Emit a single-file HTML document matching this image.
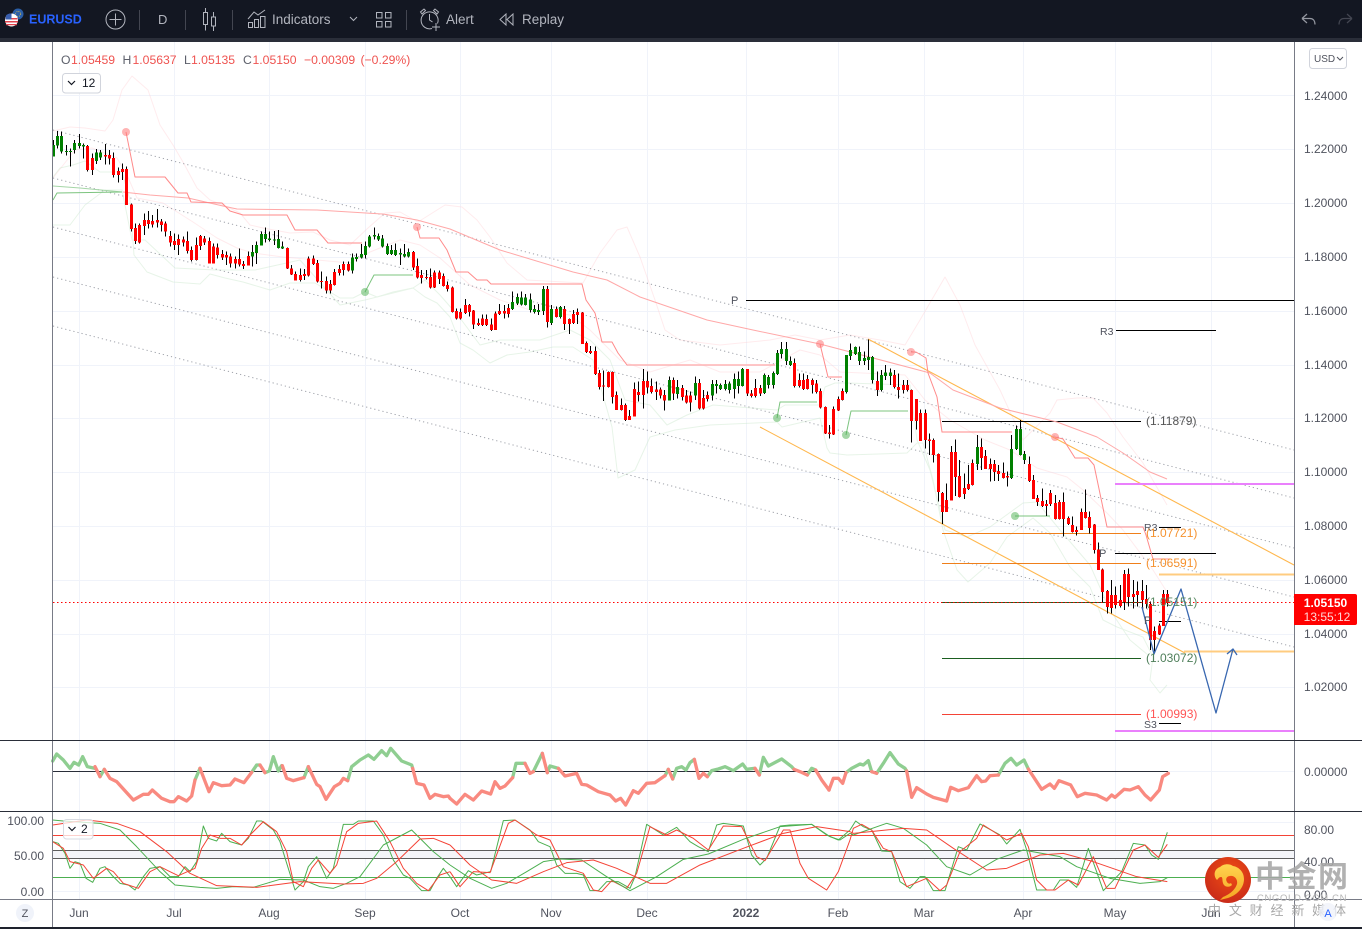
<!DOCTYPE html>
<html><head><meta charset="utf-8"><title>EURUSD</title>
<style>
html,body{margin:0;padding:0;background:#fff;width:1362px;height:929px;overflow:hidden}
svg{display:block;font-family:"Liberation Sans","Noto Sans CJK SC",sans-serif}
text{white-space:pre}
</style></head><body>
<svg width="1362" height="929" viewBox="0 0 1362 929" xmlns="http://www.w3.org/2000/svg">
<rect width="1362" height="929" fill="#fff"/>

<!-- grid -->
<g stroke="#f0f3fa" stroke-width="1" fill="none" shape-rendering="crispEdges">
<path d="M53 95.5H1294M53 149.5H1294M53 203.5H1294M53 257.5H1294M53 311.5H1294M53 365.5H1294M53 418.5H1294M53 472.5H1294M53 526.5H1294M53 580.5H1294M53 634.5H1294M53 687.5H1294"/>
<path d="M79.5 42V899M174.5 42V899M269.5 42V899M365.5 42V899M460.5 42V899M551.5 42V899M647.5 42V899M746.5 42V899M838.5 42V899M924.5 42V899M1023.5 42V899M1115.5 42V899M1211.5 42V899"/>
<path d="M53 771.5H1294M53 822.5H1294M53 891.5H1294"/>
</g>

<!-- faint bands -->
<g fill="none" stroke-width="1" stroke-linejoin="round">
<g stroke="#ffcdd2" opacity=".38">
<path d="M53 131L70 127 85 128 105 131 113 120 122 90 132 76 148 90 160 125 173 145 183 162 197 188 210 200 223 205 240 213 250 225 263 228 290 233 313 232 330 240 350 245 368 228 385 213 400 212 418 222 445 205 462 207 477 220 490 237 507 263 527 280 583 283 600 253 617 230 627 227 640 257 655 300 665 330 680 340 720 345 770 340 795 335 820 340 850 335 880 340 905 345 920 320 945 277 960 305 975 345 1000 390 1023 440 1050 413 1057 400 1077 398 1093 398 1107 413 1123 437 1143 463 1167 505"/>
<path d="M53 178L75 150 92 148 102 152 117 158 127 175 137 198 163 203 193 222 217 238 237 248 253 253 283 257 317 260 350 263 370 252 400 240 420 245 440 258 470 285 500 300 530 310 570 315 590 330 620 360 650 372 663 368 690 360 720 372 760 372 800 350 820 355 840 372 905 375 925 400 950 420 985 440 1010 450 1037 468 1067 477 1083 490 1107 513 1123 530 1153 570 1167 592"/>
</g>
<g stroke="#c8e6c9" opacity=".42">
<path d="M53 177L60 168 73 165 85 161 100 172 122 172 130 200 134 255 147 272 173 282 200 284 210 274 225 278 243 282 270 290 290 283 315 283 340 298 353 298 365 292 377 297 393 292 413 288 425 297 437 303 450 317 460 343 473 350 490 363 507 355 530 352 553 347 573 347 593 360 612 427 618 478 635 470 650 437 675 430 710 425 777 422 782 427 820 418 827 448 830 453 847 455 907 453 917 443 923 443 933 480 943 530 957 570 968 582 990 563 1007 537 1033 518 1050 533 1070 567 1090 587 1103 620 1117 627 1143 637 1153 657 1150 680 1160 693 1167 685"/>
<path d="M53 225L70 225 85 205 105 190 122 190 132 240 145 240 175 268 215 270 255 270 300 260 340 305 365 300 393 293 413 288 425 280 440 295 460 318 480 345 500 340 540 340 570 330 590 340 610 360 625 400 650 405 667 425 687 415 713 405 777 410 785 405 820 405 825 387 835 383 847 383 910 385 917 440 930 470 945 530 967 537 990 527 1023 503 1037 502 1060 530 1090 565 1110 610 1130 640 1148 655"/>
</g>
</g>

<!-- dotted channels -->
<g stroke="#9598a1" stroke-width="1" stroke-dasharray="1.2 3" fill="none" opacity=".9">
<path d="M53 130L1294 450M53 178L1294 498M53 227L1294 548M53 277L1294 597M53 326L1294 647"/>
</g>

<!-- orange channel & levels -->
<g fill="none">
<path d="M868 339L1294 565M760 427L1185 653" stroke="#ffb74d" stroke-width="1.1"/>
<path d="M1159 574.5H1294M1184 651.5H1294" stroke="#ffcc80" stroke-width="2"/>
<path d="M1115 484H1294M1115 731H1294" stroke="#ea80fc" stroke-width="2"/>
<g shape-rendering="crispEdges" stroke-width="1">
<path d="M942 533.5H1141M942 563.5H1141" stroke="#ef7f1a"/>
<path d="M942 602.5H1141M942 658.5H1141" stroke="#1b5e20"/>
<path d="M942 714.5H1141" stroke="#f44336"/>
<path d="M746 300.5H1294M1116 330.5H1216M942 421.5H1141M1159 527.5H1181M1115 553.5H1216M1159 621.5H1181M1159 723.5H1181" stroke="#000"/>
</g>
</g>

<!-- trend lines -->
<g fill="none" stroke-linejoin="round">
<path d="M53 186L80 188 122 192" stroke="#a5d6a7" stroke-width="1"/>
<path d="M123 192L150 195 188 198 223 206 237 209 317 210 383 214 417 220 450 229 500 250 573 272 607 280 640 297 707 320 753 330 820 344 930 373 953 390 1000 408 1057 422 1097 437 1123 453 1150 472 1167 479" stroke="#ffa8a8" stroke-width="1"/>
<g stroke="#ff8a8a" stroke-width="1">
<path d="M126 132L135 177 165 177 178 193 187 193 191 202 222 203 230 211 243 215 287 215 295 230 317 230 328 243 362 243"/>
<path d="M417 227L420 238 439 238 447 250 456 272 468 272 477 280 487 280 491 284 582 284 586 300 595 313 602 342 612 342 618 353 627 365 640 365"/>
<path d="M820 344L828 377 842 377M911 352L916 352 926 358 928 373 937 397 942 432 1012 432M1055 437L1063 439 1075 458 1088 458 1094 465 1107 527 1143 527 1146 535 1153 559 1170 559"/>
</g>
<path d="M628 365H775" stroke="#ffb4b4" stroke-width="1.6"/>
<g stroke="#7cc47f" stroke-width="1">
<path d="M53 200L57 193 122 192"/>
<path d="M365 292L374 275 413 275"/>
<path d="M777 418L780 402 817 402"/>
<path d="M846 435L851 411 908 411"/>
<path d="M1015 516H1050"/>
</g>
</g>
<g>
<g fill="#f77" opacity=".55"><circle cx="126" cy="132" r="4"/><circle cx="417" cy="227" r="4"/><circle cx="820" cy="344" r="4"/><circle cx="911" cy="352" r="4"/><circle cx="1055" cy="437" r="4"/></g>
<g fill="#4caf50" opacity=".5"><circle cx="365" cy="292" r="4"/><circle cx="777" cy="418" r="4"/><circle cx="846" cy="435" r="4"/><circle cx="1015" cy="516" r="4"/></g>
</g>

<!-- candles -->
<g fill="none" shape-rendering="crispEdges">
<g transform="translate(50 125) scale(.33333)">
<path stroke="#000" stroke-width="3" d="M10 45V95M22 18V70M34 20V86M49 60V92M61 70V125M73 45V85M88 27V70M100 55V100M112 60V140M127 85V150M139 72V117M151 75V105M166 57V118M178 75V118M190 83V158M205 128V172M217 115V165M229 125V240M244 235V320M256 295V357M268 295V355M283 265V330M295 258V310M307 270V308M322 252V308M334 282V320M346 290V335M361 318V365M373 325V375M385 328V390M400 335V365M412 320V385M424 365V410M439 337V407M451 330V375M463 333V360M478 338V416M490 355V416M502 355V400M517 375V405M529 380V420M541 385V428M556 395V430M568 370V425M580 408V432M595 380V422M607 360V425M619 350V417M634 320V362M646 307V352M658 320V350M673 318V360M685 315V370M697 350V372M712 368V432M724 420V450M736 440V467M751 430V470M763 432V465M775 395V454M790 392V420M802 405V472M814 440V490M829 455V505M841 465V505M853 432V482M868 420V452M880 410V452M895 410V440"/>
<path stroke="#f00" stroke-width="9" d="M112 63V135M127 99V135M166 90V95M178 90V101M190 99V150M205 138V150M217 132V141M229 132V240M244 238V312M256 309V348M268 300V352M283 285V303M295 285V297M307 288V298M322 285V292M334 290V300M346 296V320M361 333V352M373 348V360M385 342V360M400 343V352M412 348V378M424 375V405M439 360V405M451 333V363M463 340V352M478 348V416M490 365V416M502 367V390M517 387V397M529 390V398M541 395V416M556 402V416M568 402V418M580 417V423M595 393V421M712 369V431M724 430V448M736 447V466M751 450V465M763 447V453M775 400V452M790 400V417M802 414V470M814 468V471M829 468V497M841 477V497M853 441V480M868 432V444M880 417V435M895 417V437"/>
<path stroke="#008000" stroke-width="9" d="M10 60V95M22 33V62M34 33V80M49 78V81M61 78V81M73 54V75M88 54V63M100 60V65M139 82V108M151 82V97M607 381V395M619 360V384M634 327V362M646 327V342M658 340V345M673 343V346M685 342V369M697 365V371"/>
</g>
<g transform="translate(340 220) scale(.33333)">
<path stroke="#000" stroke-width="3" d="M10 130V165M37 100V160M49 100V125M64 72V115M76 65V115M88 45V82M103 22V58M115 40V63M127 45V82M142 70V105M154 75V105M166 70V108M181 85V135M193 72V112M205 85V112M220 93V150M232 115V175M244 150V190M259 150V178M271 145V205M283 152V204M298 152V192M310 160V200M322 185V215M337 200V278M349 265V298M361 265V298M376 237V282M388 252V290M400 270V327M415 295V318M427 283V318M439 283V318M454 295V333M466 275V330M478 252V285M493 255V295M505 252V293M517 215V270M532 220V255M544 215V256M556 222V257M571 220V278M583 255V280M595 252V285M610 198V285M622 198V323M634 255V315M649 260V292M661 258V295M673 258V330M688 295V342M700 270V312M712 265V312M727 276V372M739 365V399M751 378V402M766 380V465M778 450V508M790 452V543M805 455V502M817 455V550M829 515V570M844 535V572M856 550V603M868 570V600M883 487V590M895 500V545"/>
<path stroke="#f00" stroke-width="9" d="M10 132V150M220 96V142M232 138V173M244 165V174M259 171V174M271 171V203M283 158V203M298 158V177M310 168V198M322 195V207M337 203V276M349 273V295M361 276V295M376 255V279M388 255V276M400 272V313M415 309V315M427 295V315M439 297V315M454 313V330M466 280V330M478 273V282M493 273V280M505 264V282M622 207V306M649 267V291M673 267V312M688 297V312M700 282V309M712 276V285M727 277V372M739 369V396M751 393V399M766 393V462M778 459V501M790 497V500M805 456V501M817 456V531M829 525V570M844 555V570M856 555V600M868 588V600M883 507V590M895 516V525"/>
<path stroke="#008000" stroke-width="9" d="M37 113V152M49 111V117M64 102V113M76 78V105M88 50V80M103 45V50M115 48V58M127 55V80M142 78V102M154 90V102M166 90V105M181 99V103M193 102V110M205 96V110M517 246V267M532 231V250M544 233V254M556 233V255M571 239V270M583 267V276M595 270V276M610 207V273M634 267V309M661 261V291"/>
</g>
<g transform="translate(600 330) scale(.33333)">
<path stroke="#000" stroke-width="3" d="M115 155V200M130 117V236M142 125V190M154 145V190M169 155V210M181 172V205M193 180V242M208 140V212M220 142V210M232 150V205M247 165V212M259 180V220M271 185V245M286 140V210M298 147V238M310 180V238M322 185V215M337 150V212M349 150V190M361 160V180M376 150V182M388 155V190M403 130V205M415 125V190M427 114V170M442 117V198M454 180V203M466 147V203M481 165V198M493 130V192M505 135V175M520 125V175M532 60V135M544 36V85M559 36V105M571 80V108M583 85V172M598 130V172M610 130V180M622 135V178M637 145V190M649 150V190M661 175V235M676 230V312M688 285V325M700 230V315M715 200V243M727 175V211M739 75V190M751 40V90M766 50V75M778 50V105M793 65V105M805 28V120M817 78V160M832 125V198M844 120V185M856 105V150M871 115V165M883 120V175M895 130V205"/>
<path stroke="#f00" stroke-width="9" d="M115 186V195M130 153V195M142 153V172M154 168V186M169 178V186M181 178V197M193 195V212M220 150V190M247 174V201M259 197V218M271 197V218M298 159V236M310 204V236M322 195V207M442 117V190M454 190V198M466 174V198M481 174V190M583 99V168M598 150V168M610 150V177M622 147V177M637 150V165M649 160V186M661 183V233M676 231V310M688 307V312M700 237V314M715 207V241M727 183V210M832 153V180M883 135V171M895 171V180"/>
<path stroke="#008000" stroke-width="9" d="M208 150V212M232 171V192M286 159V197M337 162V197M349 162V168M361 165V177M376 162V177M388 160V180M403 147V177M415 147V168M427 117V168M493 135V189M505 141V165M520 129V165M532 69V132M544 57V72M559 57V93M571 93V105M739 75V186M751 60V78M766 51V72M778 66V93M793 84V93M805 81V90M817 81V150M844 135V180M856 127V138M871 127V138"/>
</g>
<g transform="translate(890 380) scale(.33333)">
<path stroke="#000" stroke-width="3" d="M40 0V40M52 0V35M65 28V187M79 57V148M91 88V183M106 88V205M118 160V225M130 175V247M145 220V365M157 336V432M169 310V396M184 198V362M196 178V348M209 240V352M223 280V357M235 255V330M247 238V316M262 165V270M274 175V270M286 210V267M301 236V305M313 240V303M325 255V303M340 248V295M352 275V320M364 165V297M379 137V210M391 120V226M403 213V252M418 230V306M430 285V357M442 345V378M457 325V381M469 360V408M481 330V378M496 345V418M508 360V418M520 337V470M535 410V435M547 410V458M559 440V467M574 385V450M586 328V415M598 395V460M613 432V520M625 488V570M637 566V667M652 630V700M664 600V700M676 620V685M691 615V682M703 570V690M715 565V680M730 600V685M742 605V680M757 600V685M769 615V685M781 665V810M793 740V815M808 730V765M820 630V738M832 630V680"/>
<path stroke="#f00" stroke-width="9" d="M40 15V30M52 15V30M65 30V123M79 57V123M91 99V183M106 99V180M118 178V183M130 180V225M145 222V336M157 339V396M169 360V396M184 216V362M196 216V291M209 288V351M223 324V342M235 312V327M247 249V315M274 201V234M286 228V267M301 252V267M313 252V276M325 273V282M340 279V294M352 288V292M418 252V303M430 300V357M442 354V366M457 363V378M469 372V378M481 339V372M496 369V417M508 366V417M520 366V417M535 414V432M547 435V456M559 450V456M574 396V450M586 396V414M598 411V444M613 433V510M625 508V570M637 568V636M652 633V681M664 645V684M676 645V675M691 660V678M703 582V666M715 582V651M730 642V651M742 633V645M757 633V660M769 657V672M781 672V780M793 753V780M808 736V763M820 642V738M832 642V669"/>
<path stroke="#008000" stroke-width="9" d="M262 201V252M364 207V294M379 147V207M391 147V225M403 222V240"/>
</g>
</g>

<!-- price line -->
<path d="M53 602.5H1294" stroke="#f00" stroke-width="1" stroke-dasharray="1.5 2.5" shape-rendering="crispEdges"/>

<!-- blue projection -->
<g fill="none" stroke="#3867b0" stroke-width="1.3" stroke-linejoin="round">
<path d="M1142 607L1154 654 1181 589 1216 713 1233 649"/>
<path d="M1227 654L1233 649 1237 655"/>
</g>

<!-- level labels -->
<g font-size="12">
<text x="731" y="304" fill="#50535e" font-size="11">P</text>
<text x="1100" y="335" fill="#50535e" font-size="10.5">R3</text>
<text x="1144" y="531" fill="#50535e" font-size="10.5">R3</text>
<text x="1099" y="557" fill="#50535e" font-size="11">P</text>
<text x="1144" y="624" fill="#50535e" font-size="11">P</text>
<text x="1144" y="728" fill="#50535e" font-size="10.5">S3</text>
<text x="1146" y="425" fill="#555">(1.11879)</text>
<text x="1146" y="537" fill="#f5922f">(1.07721)</text>
<text x="1146" y="567" fill="#f5922f">(1.06591)</text>
<text x="1146" y="606" fill="#5a8a63">(1.05151)</text>
<text x="1146" y="662" fill="#4f7f5a">(1.03072)</text>
<text x="1146" y="718" fill="#f55">(1.00993)</text>
</g>

<!-- oscillator pane 2 -->
<path d="M53 771.5H1168" stroke="#2a2e39" stroke-width="1.2" shape-rendering="crispEdges"/>
<g fill="none" stroke-linejoin="round" stroke-linecap="round">
<g transform="translate(0 735) scale(.33333)" stroke-width="10">
<path stroke="#8fce91" d="M158 78L170 57 190 75 210 100 222 82 236 90 248 65 262 95 285 100M300 125L313 103M585 135L600 100M755 112L770 90 780 90M795 113L808 108 820 65 835 108 845 92M912 128L925 95M1043 137L1055 95 1080 75 1105 60 1122 73 1145 47 1160 62 1172 40 1205 78 1235 90 1238 100"/>
<path stroke="#f98a80" d="M285 95L300 125M313 103L330 130 350 140 400 195 430 178 445 178 457 165 485 190 510 200 522 200 535 185 560 198 575 183 585 135M600 100L627 170 640 143 665 152 690 150 705 132 732 143 755 112M780 90L795 113M847 92L860 130 880 137 912 128M925 95L950 148 960 155 978 193 1003 155 1020 145 1030 130 1043 137M1238 100L1250 145 1272 150 1290 190 1305 178 1330 185 1345 183 1350 190"/>
</g>
<g transform="translate(450 740) scale(.33333)" stroke-width="10">
<path stroke="#8fce91" d="M188 113L198 70 225 70M250 95L277 40M292 98L300 78 325 85M645 107L655 88M668 117L680 85 695 80 708 90 720 68 733 58M772 110L785 92 805 87 825 80 850 92 878 72 890 88 915 85M928 105L940 52 955 78 995 57 1025 80 1032 88M1072 105L1085 85 1097 90"/>
<path stroke="#f98a80" d="M0 175L20 192 45 163 70 180 95 153 122 162 135 125 150 145 165 138 188 113M225 70L240 100 250 95M277 40L292 98M325 85L345 108 380 100 395 133 410 135 445 155 480 165 497 183 512 175 527 195 550 152 565 160 590 130 615 128 645 107M655 88L668 117M733 58L747 115 760 100 772 110M915 85L928 105M1032 88L1050 95 1072 105M1097 90L1115 120 1137 150"/>
</g>
<g transform="translate(820 740) scale(.33333)" stroke-width="10">
<path stroke="#8fce91" d="M78 98L95 85 120 72 130 75 145 62 155 95M170 100L190 70 210 38 235 72 255 85 260 93M535 105L555 70 573 55 590 75 612 60 625 87"/>
<path stroke="#f98a80" d="M27 150L40 115 55 115 68 130 78 98M155 95L170 100M260 93L275 172 290 143 320 162 340 172 380 183 392 142 415 152 445 143 470 107 485 125 497 123 510 107 535 105M625 87L665 148 690 132 703 145 717 122 752 135 772 170 795 160 830 165 860 180 875 165 885 172 912 148 930 150 955 140 975 165 992 180 1018 150 1028 110 1045 100"/>
</g>
</g>

<!-- stochastic pane 3 -->
<rect x="53" y="851" width="1241" height="8" fill="#f4f5f9"/>
<g shape-rendering="crispEdges" stroke-width="1" fill="none">
<path d="M53 835.5H1294" stroke="#f44336"/>
<path d="M53 850.5H1294M53 858.5H1294" stroke="#5d5d5d"/>
<path d="M53 877.5H1294" stroke="#4caf50"/>
</g>
<g fill="none" stroke-linejoin="round">
<g transform="translate(0 735) scale(.33333)" stroke-width="3">
<path stroke="#4caf50" d="M158 320L175 325 195 355 210 400 225 380 240 385 258 430 278 442 300 400 315 395 335 420 360 445 385 450 405 465 430 425 450 400 480 395 510 425 535 425 555 395 570 410 590 380 610 273 625 310 650 318 665 295 690 320 725 330 745 310 770 258 785 258 820 285 840 320 885 465 910 440 925 395 950 365 980 430 1000 400 1030 268 1060 268 1075 258 1120 258 1150 300 1180 375 1210 420 1230 430 1265 467 1290 467 1310 430 1330 400 1350 425"/>
<path stroke="#f44336" d="M158 320L190 340 210 380 250 390 280 430 320 400 340 410 370 445 415 460 450 410 480 395 510 410 535 422 585 400 605 340 630 300 660 310 690 310 725 330 750 300 790 260 830 290 860 350 880 440 910 455 935 400 955 375 990 415 1010 390 1040 290 1075 265 1130 258 1170 320 1210 400 1250 445 1285 467 1320 420 1350 410"/>
<path stroke="#4caf50" d="M158 255L190 258 300 265 360 285 410 335 480 410 525 450 600 457 650 460 700 455 760 457 840 433 910 435 960 455 1000 460 1040 445 1080 425 1150 330 1235 285 1300 350 1350 390"/>
<path stroke="#f44336" d="M158 270L260 255 350 265 420 290 500 350 570 415 650 452 770 457 900 440 1030 447 1090 445 1130 430 1190 380 1260 312 1300 310 1350 330"/>
</g>
<g transform="translate(450 740) scale(.33333)" stroke-width="3">
<path stroke="#4caf50" d="M0 410L20 440 55 392 80 405 122 395 160 242 195 240 240 270 265 305 300 320 320 375 345 400 380 400 400 405 420 452 445 452 470 425 505 425 540 445 555 410 590 253 640 285 680 262 720 305 745 320 775 335 800 255 820 250 880 258 905 345 930 375 950 355 990 258 1020 255 1085 253 1130 285 1165 300 1200 270"/>
<path stroke="#f44336" d="M0 395L30 440 70 395 120 398 175 250 195 240 260 285 300 300 340 380 400 400 430 450 455 455 485 422 530 445 560 400 600 260 650 285 680 270 730 295 775 330 820 258 875 260 920 350 945 362 1000 270 1020 270 1050 370 1075 415 1130 450 1165 395 1200 300"/>
<path stroke="#4caf50" d="M0 375L60 415 125 445 170 430 230 395 280 365 330 357 395 360 470 410 540 452 620 410 700 358 775 342 880 298 990 260 1085 253 1140 290 1170 300 1200 280"/>
<path stroke="#f44336" d="M0 315L60 375 125 420 200 430 280 395 350 368 430 360 500 385 600 430 650 430 750 375 880 325 1000 280 1100 260 1200 275"/>
</g>
<g transform="translate(820 740) scale(.33333)" stroke-width="3">
<path stroke="#4caf50" d="M90 270L107 243 130 260 155 270 185 333 215 335 240 425 270 445 300 410 315 410 340 452 375 452 415 320 440 330 480 252 540 285 560 312 600 268 620 330 650 450 700 450 720 420 745 420 770 442 805 325 850 452 905 395 940 310 975 315 995 345 1015 358 1042 277"/>
<path stroke="#f44336" d="M90 300L100 265 125 253 155 270 190 325 215 335 260 440 320 415 360 452 380 435 420 335 470 295 490 255 560 300 605 280 625 320 650 420 680 450 705 450 745 420 775 435 820 350 860 445 885 445 940 330 975 315 1015 352 1042 313"/>
<path stroke="#4caf50" d="M90 280L100 285 200 250 250 265 320 315 380 380 450 405 530 358 610 330 720 350 770 380 870 415 960 430 1020 425 1042 413"/>
<path stroke="#f44336" d="M90 275L100 280 250 265 320 270 400 325 500 390 560 385 660 345 730 340 820 365 950 410 1042 425"/>
</g>
</g>

<!-- pane borders -->
<g shape-rendering="crispEdges" fill="none" stroke-width="1">
<path d="M52.5 42V927M1294.5 42V927" stroke="#787b86"/>
<path d="M0 740.5H1362M0 811.5H1362" stroke="#2a2e39"/>
<path d="M0 899.5H1362" stroke="#787b86"/>
</g>

<!-- price label -->
<path d="M1294 594H1355a2 2 0 0 1 2 2V623a2 2 0 0 1-2 2H1294Z" fill="#f00"/>
<text x="1325.5" y="607" fill="#fff" font-size="12" font-weight="bold" text-anchor="middle">1.05150</text>
<text x="1327" y="621" fill="#ffd6d6" font-size="12" text-anchor="middle">13:55:12</text>

<!-- right axis -->
<g font-size="12" fill="#50535e">
<text x="1304" y="100">1.24000</text><text x="1304" y="153">1.22000</text><text x="1304" y="207">1.20000</text><text x="1304" y="261">1.18000</text><text x="1304" y="315">1.16000</text><text x="1304" y="369">1.14000</text><text x="1304" y="422">1.12000</text><text x="1304" y="476">1.10000</text><text x="1304" y="530">1.08000</text><text x="1304" y="584">1.06000</text><text x="1304" y="638">1.04000</text><text x="1304" y="691">1.02000</text>
<text x="1304" y="776">0.00000</text>
<text x="1304" y="834">80.00</text><text x="1304" y="866">40.00</text><text x="1304" y="899">0.00</text>
<text x="44" y="825" text-anchor="end">100.00</text><text x="44" y="860" text-anchor="end">50.00</text><text x="44" y="896" text-anchor="end">0.00</text>
</g>

<!-- time axis -->
<g font-size="12" fill="#50535e" text-anchor="middle">
<text x="79" y="917">Jun</text><text x="174" y="917">Jul</text><text x="269" y="917">Aug</text><text x="365" y="917">Sep</text><text x="460" y="917">Oct</text><text x="551" y="917">Nov</text><text x="647" y="917">Dec</text><text x="746" y="917" font-weight="bold">2022</text><text x="838" y="917">Feb</text><text x="924" y="917">Mar</text><text x="1023" y="917">Apr</text><text x="1115" y="917">May</text><text x="1211" y="917">Jun</text>
</g>

<!-- legend -->
<g font-size="12.2">
<text y="64" fill="#5d606b"><tspan x="61">O</tspan><tspan x="122.5">H</tspan><tspan x="184">L</tspan><tspan x="243">C</tspan></text>
<text y="64" fill="#ef5350"><tspan x="71">1.05459</tspan><tspan x="132.5">1.05637</tspan><tspan x="191">1.05135</tspan><tspan x="252.5">1.05150</tspan><tspan x="304">−0.00309</tspan><tspan x="360.5">(−0.29%)</tspan></text>
</g>
<rect x="62.5" y="73.5" width="38" height="19.5" rx="3" fill="#fff" stroke="#d1d4dc"/>
<path d="M68 81L71.5 84.5 75 81" fill="none" stroke="#131722" stroke-width="1.2"/>
<text x="82" y="87" font-size="12" fill="#131722">12</text>
<rect x="63.5" y="819.5" width="29.5" height="19.5" rx="3" fill="#fff" fill-opacity=".75" stroke="#d8dbe2"/>
<path d="M68.5 827L72 830.5 75.5 827" fill="none" stroke="#131722" stroke-width="1.2"/>
<text x="81" y="833" font-size="12" fill="#131722">2</text>

<!-- Z / A -->
<circle cx="25" cy="913" r="9" fill="#f0f3fa"/><text x="25" y="917" font-size="11" fill="#50535e" text-anchor="middle">Z</text>

<!-- USD button -->
<rect x="1309.5" y="48.5" width="37" height="20" rx="3" fill="#fff" stroke="#d1d4dc"/>
<text x="1314" y="62" font-size="10" fill="#50535e">USD</text>
<path d="M1337 57L1340 60 1343 57" fill="none" stroke="#50535e"/>

<!-- watermark -->
<defs>
<radialGradient id="lg" cx=".55" cy=".35" r=".75"><stop offset="0" stop-color="#f04e14"/><stop offset="1" stop-color="#c4261a"/></radialGradient>
<linearGradient id="ly" x1="0" y1="0" x2="0" y2="1"><stop offset="0" stop-color="#ffd44f"/><stop offset="1" stop-color="#f5a623"/></linearGradient>
</defs>
<circle cx="1228" cy="880" r="23" fill="url(#lg)"/>
<path d="M1217 880c-4-4-3-11 3-13 3-3 9-4 13-1 6 1 11 6 11 13 0 9-7 16-16 19l-8 2 3-3c7-3 12-7 14-13 1-5-3-9-7-8-3 0-5 3-3 6 1 2 3 2 4 1l1 2c-3 3-8 2-9-2-1-3 0-6-2-6-2 0-3 2-4 3z" fill="url(#ly)"/>
<text x="1255" y="887" font-size="30" font-weight="bold" fill="#a6a6a6" fill-opacity=".88" textLength="93" font-family="'Noto Sans CJK SC','WenQuanYi Zen Hei',sans-serif">中金网</text>
<text x="1257" y="901" font-size="9.5" fill="#b5b5b5" textLength="90" letter-spacing=".5">CNGOLD.COM.CN</text>
<text x="1208" y="915" font-size="13" fill="#a8a8a8" textLength="138" font-family="'Noto Sans CJK SC','WenQuanYi Zen Hei',sans-serif">中 文 财 经 新 媒 体</text>
<circle cx="1328" cy="912" r="9" fill="#f0f3fa" fill-opacity=".8"/><text x="1328" y="917" font-size="11" fill="#2962ff" text-anchor="middle">A</text>

<!-- bottom bar -->
<rect x="0" y="927" width="1362" height="2" fill="#1e222d"/>

<!-- toolbar -->
<rect x="0" y="0" width="1362" height="38" fill="#131722"/>
<rect x="0" y="38" width="1362" height="4" fill="#2a2e39"/>
<g>
<circle cx="18" cy="14" r="5.5" fill="#2b5fa8"/>
<circle cx="18" cy="14" r="2.5" fill="none" stroke="#ffcc33" stroke-width=".8" stroke-dasharray=".8 1.2"/>
<circle cx="11.5" cy="20" r="6.5" fill="#fff"/>
<path d="M5.5 18h12v1.5h-12zM5 21h13v1.5h-13zM6 24h11v1.3h-11z" fill="#e0424c"/>
<path d="M6 15.5a6.5 6.5 0 0 1 5.5-2v6h-6z" fill="#3a5fae"/>
</g>
<text x="29" y="23.5" font-size="12.5" font-weight="bold" fill="#2962ff">EURUSD</text>
<g fill="none" stroke="#b2b5be" stroke-width="1">
<circle cx="115.5" cy="19.5" r="9.5"/>
<path d="M115.5 13.5v12M109.5 19.5h12"/>
<path d="M203.5 12.5h4v12h-4zM205.5 8v4.5M205.5 24.5v6M211.5 17h4v9h-4zM213.5 12v5M213.5 26v5"/>
<path d="M248.5 27.5v-5h4v5zM254.5 27.5v-8h4v8zM260.5 27.5v-11h4.5v11zM248 19l6-7 4 3 7-5"/>
<path d="M376.5 12.5h5.5v5.5h-5.5zM385.5 12.5h5.5v5.5h-5.5zM376.5 21.5h5.5v5.5h-5.5zM385.5 21.5h5.5v5.5h-5.5z"/>
<path d="M432 28.5a8.5 8.5 0 1 1 5.5-5M429.5 14v6l3 2M422 14l3.5-3.5-1.5-1.5-3.5 3zM437 14l-3.5-3.5 1.5-1.5 3.5 3zM436 23v8M432 27h8"/>
<path d="M506 14l-6 5.5 6 5.5zM513 14l-6 5.5 6 5.5z"/>
</g>
<path d="M139.5 10v20M185.5 10v20M232.5 10v20M406.5 10v20" stroke="#434651" stroke-width="1"/>
<g font-size="14" fill="#b2b5be">
<text x="158" y="24" font-size="13">D</text>
<text x="272" y="24" font-size="13.5">Indicators</text>
<text x="446" y="24" font-size="13.5">Alert</text>
<text x="522" y="24" font-size="13.5">Replay</text>
</g>
<path d="M350 17l3.5 3.5 3.5-3.5" fill="none" stroke="#b2b5be"/>
<g fill="none" stroke-width="1.2">
<path d="M1302 18.5l5-4.5M1302 18.5l5 4.5M1302 18.5h8c3 0 5 2 5 6" stroke="#9598a1"/>
<path d="M1352 18.5l-5-4.5M1352 18.5l-5 4.5M1352 18.5h-8c-3 0-5 2-5 6" stroke="#434651"/>
</g>
</svg>
</body></html>
